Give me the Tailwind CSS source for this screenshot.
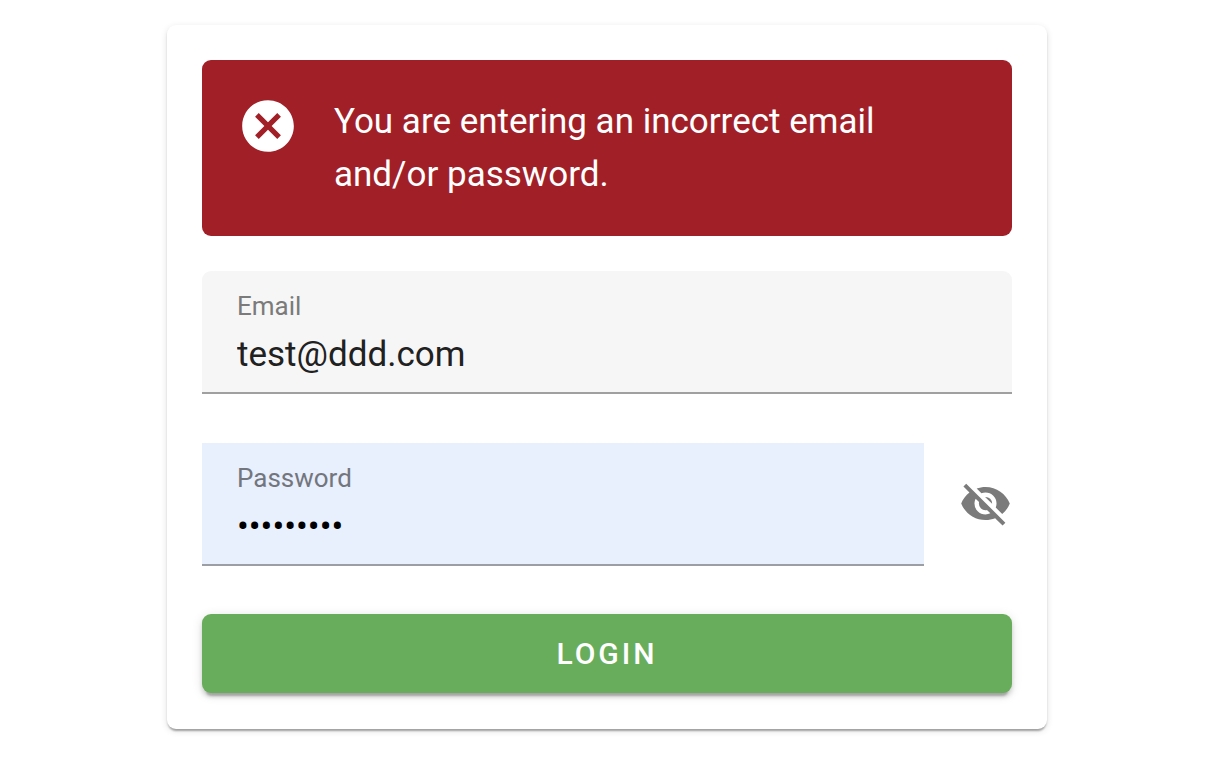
<!DOCTYPE html>
<html lang="en">
<head>
<meta charset="utf-8">
<meta name="viewport" content="width=device-width, initial-scale=1">
<title>Login</title>
<script src="https://cdn.jsdelivr.net/npm/@tailwindcss/browser@4"></script>
</head>
<body class="bg-white font-['Roboto',sans-serif] text-[#212121]">
<main class="overflow-hidden pb-8 pt-[25px] pl-[167px] pr-[179px]">
  <form class="flex flex-col rounded-[9px] bg-white px-[35px] pt-[35px] pb-9 shadow-[0_4px_2px_-2px_rgba(0,0,0,0.2),0_2px_2px_0_rgba(0,0,0,0.14),0_2px_7px_0_rgba(0,0,0,0.12)]">
    <div role="alert" class="flex items-start gap-[35px] rounded-[9px] bg-[#a12027] p-[35px] text-white">
      <svg class="size-[62px] shrink-0" viewBox="0 0 24 24" fill="currentColor" aria-hidden="true"><path d="M12,2C17.53,2 22,6.47 22,12C22,17.53 17.53,22 12,22C6.47,22 2,17.53 2,12C2,6.47 6.47,2 12,2M15.59,7L12,10.59L8.41,7L7,8.41L10.59,12L7,15.59L8.41,17L12,13.41L15.59,17L17,15.59L13.41,12L17,8.41L15.59,7Z"/></svg>
      <p class="max-w-[600px] text-[35px] leading-[53px]">You are entering an incorrect email and/or password.</p>
    </div>
    <div class="mt-[35px] flex flex-col rounded-t-[9px] border-b-2 border-[#a0a0a0] bg-[#f6f6f6] px-[35px] pt-[18px] pb-2">
      <label for="email" class="text-[26px] leading-[35px] text-[#7b7b7b]">Email</label>
      <input id="email" type="email" value="test@ddd.com" class="h-[60px] w-full bg-transparent text-[35px] outline-none">
    </div>
    <div class="mt-[49px] flex items-center gap-[35px]">
      <div class="flex min-w-0 flex-1 flex-col border-b-2 border-[#9c9ea6] bg-[#e8effd] px-[35px] pt-[18px] pb-2">
        <label for="password" class="text-[26px] leading-[35px] text-[#73767d]">Password</label>
        <input id="password" type="password" value="password1" class="h-[60px] w-full bg-transparent text-[35px] text-black outline-none">
      </div>
      <button type="button" aria-label="Show password" class="pb-[2px] text-[#7b7b7b]">
        <svg class="size-[53px]" viewBox="0 0 24 24" fill="currentColor" aria-hidden="true"><path d="M11.83,9L15,12.16C15,12.11 15,12.05 15,12A3,3 0 0,0 12,9C11.94,9 11.89,9 11.83,9M7.53,9.8L9.08,11.35C9.03,11.56 9,11.77 9,12A3,3 0 0,0 12,15C12.22,15 12.44,14.97 12.65,14.92L14.2,16.47C13.53,16.8 12.79,17 12,17A5,5 0 0,1 7,12C7,11.21 7.2,10.47 7.53,9.8M2,4.27L4.28,6.55L4.73,7C3.08,8.3 1.78,10 1,12C2.73,16.39 7,19.5 12,19.5C13.55,19.5 15.03,19.2 16.38,18.66L16.81,19.08L19.73,22L21,20.73L3.27,3M12,7A5,5 0 0,1 17,12C17,12.64 16.87,13.26 16.64,13.82L19.57,16.75C21.07,15.5 22.27,13.86 23,12C21.27,7.61 17,4.5 12,4.5C10.6,4.5 9.26,4.75 8,5.2L10.17,7.35C10.74,7.13 11.35,7 12,7Z"/></svg>
      </button>
    </div>
    <button type="submit" class="mt-12 h-[79px] rounded-[9px] bg-[#68ad5b] text-[30px] font-medium tracking-widest text-white shadow-[0_7px_2px_-4px_rgba(0,0,0,0.2),0_4px_4px_0_rgba(0,0,0,0.14),0_2px_11px_0_rgba(0,0,0,0.12)]">LOGIN</button>
  </form>
</main>
</body>
</html>
